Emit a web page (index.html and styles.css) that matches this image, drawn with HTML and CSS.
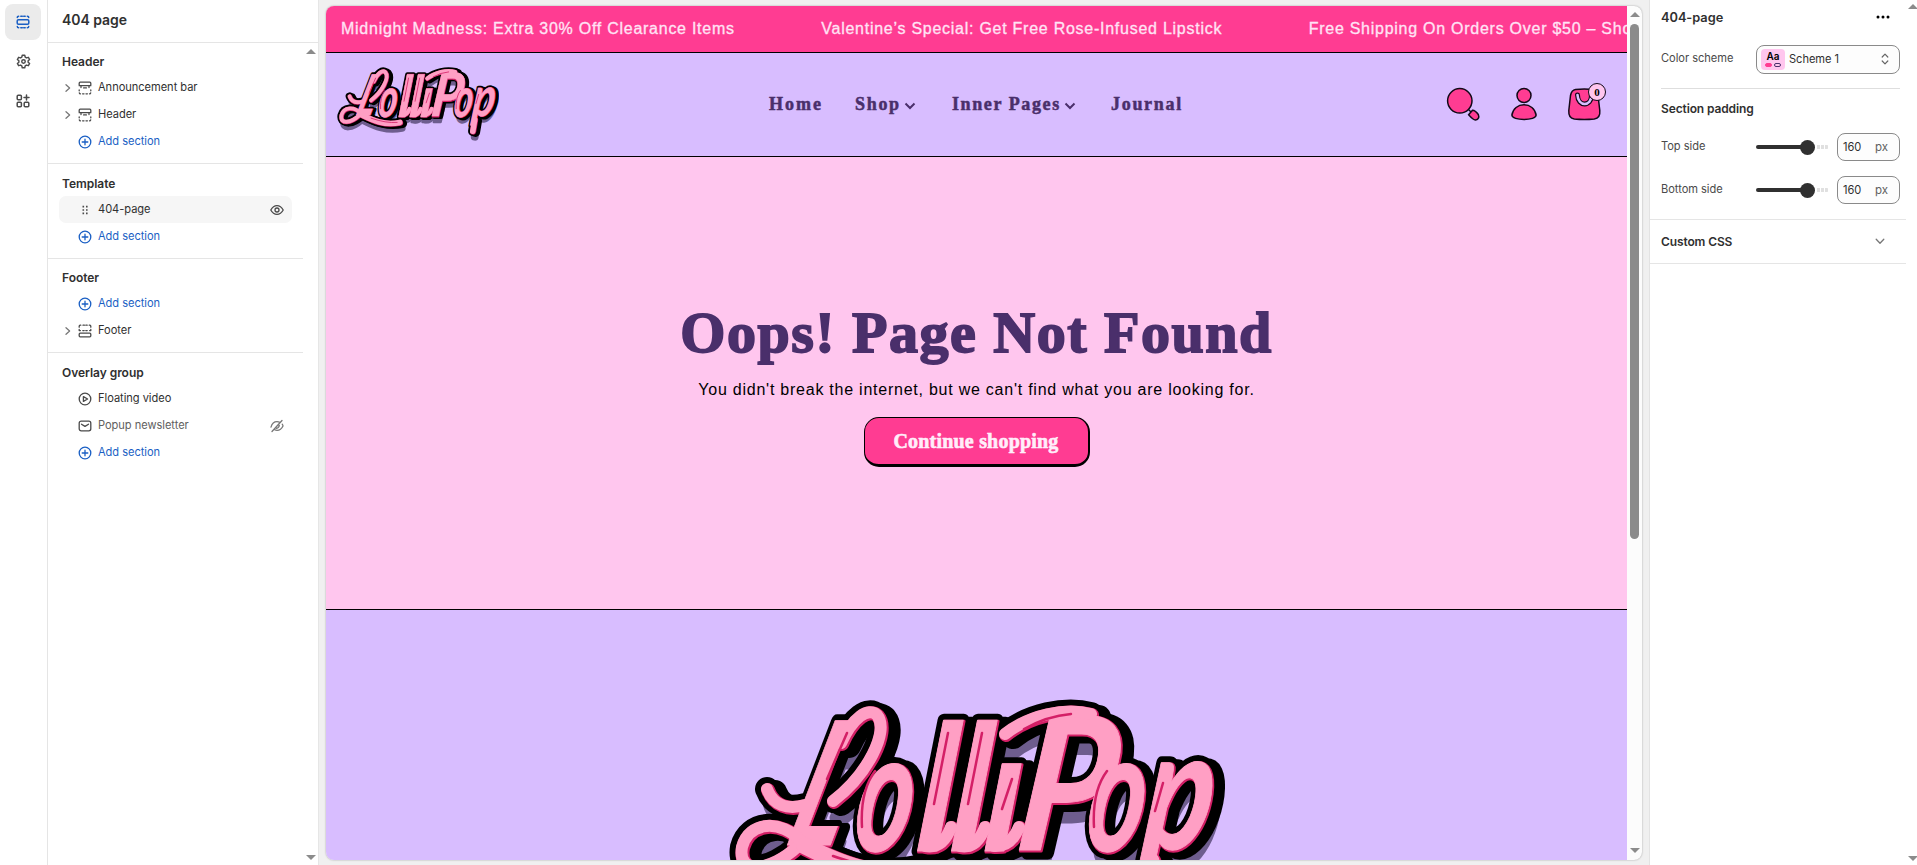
FILE: index.html
```html
<!DOCTYPE html>
<html lang="en">
<head>
<meta charset="utf-8">
<title>404 page</title>
<link rel="stylesheet" href="styles.css">
</head>
<body>
<svg class="defs" width="0" height="0" aria-hidden="true">
  <defs>
  <symbol id="plus" viewBox="0 0 14 14"><circle cx="7" cy="7" r="5.8"/><path d="M7 4.2v5.6M4.2 7h5.6"/></symbol>
  <symbol id="caret" viewBox="0 0 8 10"><path d="M2 1.8 5.6 5 2 8.2"/></symbol>
  <symbol id="head" viewBox="0 0 14 14"><path d="M1.2 4V2.2Q1.2 1.2 2.2 1.2h9.6q1 0 1 1V4M1.2 4.7h11.6M3 4.7v1.8M11 4.7v1.8M5.6 6.9h2.8M1.2 9v.8M12.8 9v.8M1.3 11.8q.2 1 1.2 1M12.7 11.8q-.2 1-1.2 1M4.6 12.8h1.4M8 12.8h1.4"/></symbol>
  <symbol id="foot" viewBox="0 0 14 14"><path d="M1.2 3.2V2.2q0-1 1-1h.6M12.8 3.2V2.2q0-1-1-1h-.6M5 1.2h1.4M7.8 1.2h1.4M1.2 5.4v1.2h1.2M12.8 5.4v1.2h-1.2M4.8 6.6h1.4M7.8 6.6h1.4"/><rect x="1.2" y="9.2" width="11.6" height="3.6" rx="1"/></symbol>
  <symbol id="eye" viewBox="0 0 14 14"><path d="M.8 7C2.3 4.200 4.500 2.600 7 2.600S11.700 4.200 13.200 7c-1.500 2.800-3.700 4.400-6.200 4.400S2.300 9.800.8 7Z"/><circle cx="7" cy="7" r="2"/></symbol>
  <symbol id="up" viewBox="0 0 10 5"><path d="M0 5 5 0l5 5Z"/></symbol>
  <symbol id="down" viewBox="0 0 10 5"><path d="M0 0h10L5 5Z"/></symbol>
  <g id="word">
    <text transform="translate(54 146) skewX(-17) scale(.64 1)" font-size="172">L</text>
    <text transform="translate(122 152) skewX(-7) scale(.66 1)" font-size="168">o</text>
    <text transform="translate(185 152) skewX(-5) scale(.92 1)" font-size="176">l</text>
    <text transform="translate(219 152) skewX(-5) scale(.92 1)" font-size="176">l</text>
    <text transform="translate(252 152) skewX(-5) scale(.92 1)" font-size="170">ı</text>
    <text transform="translate(284 151) skewX(-7) scale(.88 1)" font-size="186">P</text>
    <text transform="translate(354 152) skewX(-7) scale(.66 1)" font-size="168">o</text>
    <text transform="translate(411 150) skewX(-7) scale(.76 1)" font-size="168">p</text>
  </g>
  <g id="swash">
    <path d="M112 44C124 18 139 8 148 16C161 32 138 76 104 102"/>
    <path d="M38 90C44 106 58 111 76 106"/>
    <path d="M72 142C52 120 20 122 13 148C8 177 42 172 68 148"/>
    <path class="broad" d="M76 147C110 164 146 180 192 170"/>
    <path d="M276 35C300 16 336 8 362 15"/>
    <path class="broad" d="M422 162 416 197"/>
    <path d="M196 147Q214 150 222 128M231 147Q248 150 256 128M265 147Q282 148 290 128"/>
  </g>
  <symbol id="logo" viewBox="0 0 496 227">
    <g class="lg-shadow" transform="translate(6 17)"><use href="#word"/><use href="#swash"/></g>
    <g class="lg-black" transform="translate(8 3)"><use href="#word"/><use href="#swash"/></g>
    <g class="lg-black"><use href="#word"/><use href="#swash"/></g>
    <g class="lg-red" transform="translate(1 1)"><use href="#word"/><use href="#swash"/></g>
    <g class="lg-pink"><use href="#word"/><use href="#swash"/></g>
    <g class="lg-line"><path d="M98 80 118 34M133 128Q131 92 146 72M205 105 219 34M239 105 253 34M273 110 283 80M295 30Q318 17 342 15M365 128Q363 92 378 72M426 112 434 84M104 157Q150 173 184 170"/></g>
  </symbol>
  </defs>
</svg>

<div class="app">
  <nav class="rail">
    <div class="rail-btn on"><svg class="ic blue" width="14" height="14" viewBox="0 0 14 14"><rect x="1.200" y="4.800" width="11.600" height="4.400" rx="1.200"/><path d="M1.300 2.600q0-1.400 1.400-1.400M12.700 2.600q0-1.400-1.400-1.400M4.800 1.200h1.500M7.700 1.200h1.500M1.300 11.400q0 1.400 1.400 1.400M12.700 11.400q0 1.400-1.400 1.400M4.800 12.800h1.500M7.700 12.800h1.500"/></svg></div>
    <div class="rail-btn"><svg class="ic" width="15" height="15" viewBox="0 0 24 24"><path class="w2" d="M10 2h4l.7 3.100 2 1.200 3.100-1 2 3.500-2.400 2.100v2.200l2.400 2.100-2 3.500-3.100-1-2 1.200L14 22h-4l-.7-3.100-2-1.200-3.100 1-2-3.500 2.400-2.100v-2.200L2.200 8.800l2-3.500 3.100 1 2-1.200Z"/><circle class="w2" cx="12" cy="12" r="2.800"/></svg></div>
    <div class="rail-btn"><svg class="ic" width="14" height="14" viewBox="0 0 14 14"><rect x="1.200" y="1.200" width="4.200" height="4.600" rx="1"/><rect x="1.200" y="8.200" width="4.200" height="4.600" rx="1"/><rect x="8.200" y="8.200" width="4.600" height="4.600" rx="1"/><path d="M10.500 1v5M8 3.500h5"/></svg></div>
  </nav>

  <aside class="panel">
    <h1 class="panel-title">404 page</h1>
    <div class="panel-body">
      <div class="groups">
        <section class="group first">
          <h2>Header</h2>
          <div class="row"><svg class="ic caret"><use href="#caret"/></svg><svg class="ic i14"><use href="#head"/></svg><span>Announcement bar</span></div>
          <div class="row"><svg class="ic caret"><use href="#caret"/></svg><svg class="ic i14"><use href="#head"/></svg><span>Header</span></div>
          <div class="row add"><svg class="ic i14"><use href="#plus"/></svg><span>Add section</span></div>
        </section>
        <section class="group tall">
          <h2>Template</h2>
          <div class="row sel"><svg class="dots" width="14" height="14" viewBox="0 0 14 14"><path d="M4.500 2.800h1.600v1.600H4.500zM8 2.800h1.600v1.600H8zM4.500 6.200h1.600v1.600H4.500zM8 6.200h1.600v1.600H8zM4.500 9.600h1.600v1.600H4.500zM8 9.600h1.600v1.600H8z"/></svg><span>404-page</span><svg class="ic i14 end"><use href="#eye"/></svg></div>
          <div class="row add"><svg class="ic i14"><use href="#plus"/></svg><span>Add section</span></div>
        </section>
        <section class="group first">
          <h2>Footer</h2>
          <div class="row add"><svg class="ic i14"><use href="#plus"/></svg><span>Add section</span></div>
          <div class="row"><svg class="ic caret"><use href="#caret"/></svg><svg class="ic i14"><use href="#foot"/></svg><span>Footer</span></div>
        </section>
        <section class="group last">
          <h2>Overlay group</h2>
          <div class="row"><svg class="ic i14" viewBox="0 0 14 14"><circle cx="7" cy="7" r="5.800"/><path d="M5.400 4.600v4.800L9.600 7Z"/></svg><span>Floating video</span></div>
          <div class="row dim"><svg class="ic i14" viewBox="0 0 14 14"><rect x="1.200" y="2.200" width="11.600" height="9.600" rx="2"/><path d="M3.500 5.200 7 7.400l3.500-2.200"/></svg><span>Popup newsletter</span><svg class="ic i14 end" viewBox="0 0 14 14"><path d="M1 8.200C2 4.600 4.500 2.700 7 2.700q1.600 0 2.800.7M12.200 5.200Q13 6.200 13 7c-1.300 2.800-3.500 4.300-6 4.300q-1 0-2-.4M12 1.500 2 12.500M6.600 9.300Q9 9 9.300 6.300"/></svg></div>
          <div class="row add"><svg class="ic i14"><use href="#plus"/></svg><span>Add section</span></div>
        </section>
      </div>
      <div class="sb"><svg class="arr"><use href="#up"/></svg><svg class="arr"><use href="#down"/></svg></div>
    </div>
  </aside>

  <main class="stage">
    <div class="preview">
      <div class="site">
        <div class="ticker"><span>Midnight Madness: Extra 30% Off Clearance Items</span><span>Valentine’s Special: Get Free Rose-Infused Lipstick</span><span>Free Shipping On Orders Over $50 – Shop</span></div>
        <header class="site-head">
          <svg class="logo-sm"><use href="#logo"/></svg>
          <nav class="menu">
            <a class="m1">Home</a>
            <a class="m2">Shop<svg class="chev" viewBox="0 0 12 8"><path d="m1.500 1.500 4.500 4.500 4.500-4.500"/></svg></a>
            <a class="m3">Inner Pages<svg class="chev" viewBox="0 0 12 8"><path d="m1.500 1.500 4.500 4.500 4.500-4.500"/></svg></a>
            <a class="m4">Journal</a>
          </nav>
          <div class="tools">
            <svg width="34" height="34" viewBox="0 0 34 34"><path d="m21.500 21.500 4 4"/><circle cx="12.800" cy="12.800" r="12.200"/><path d="M21.600 26.800 25.500 22.200Q28 22 31.300 26.500 33 31 28.500 32 26.500 32.300 21.600 26.800Z"/></svg>
            <svg width="26" height="34" viewBox="0 0 26 34"><circle cx="13" cy="7.500" r="7"/><path d="M.9 27C2 20.500 7 16.800 13 16.800S24 20.500 25.100 27c.3 6-24.500 6-24.200 0Z"/></svg>
            <div class="bag">
              <svg width="34" height="34" viewBox="0 0 34 34"><path d="M7.500 1.500Q16.500.300 25 1.500q4 .5 5 6l1.800 15q.7 7.500-5.500 8.500-10 1-20 0Q.300 30 .800 22.500L2.500 7.500q1-5.500 5-6Z"/><path class="handle" d="M9.500 7c.5 12 14 12 14 0"/><path class="handle-in" d="M9.500 7c.5 12 14 12 14 0"/></svg>
              <span class="badge">0</span>
            </div>
          </div>
        </header>
        <section class="hero">
          <h2 class="hero-title">Oops! Page Not Found</h2>
          <p class="hero-text">You didn't break the internet, but we can't find what you are looking for.</p>
          <a class="cta">Continue shopping</a>
        </section>
        <footer class="site-foot"><svg class="logo-lg"><use href="#logo"/></svg></footer>
      </div>
      <div class="scroll"><svg class="arr"><use href="#up"/></svg><div class="thumb"></div><svg class="arr"><use href="#down"/></svg></div>
    </div>
  </main>

  <aside class="props">
    <div class="props-body">
      <div class="props-main">
        <div class="p-head"><h2>404-page</h2><svg width="14" height="4" viewBox="0 0 14 4"><circle cx="2" cy="2" r="1.500"/><circle cx="7" cy="2" r="1.500"/><circle cx="12" cy="2" r="1.500"/></svg></div>
        <div class="field scheme"><label>Color scheme</label><div class="select"><span class="swatch"><b>Aa</b><i><em class="f"></em><em></em></i></span><span>Scheme 1</span><svg class="ic" width="8" height="12" viewBox="0 0 8 12"><path d="M1.200 4 4 1.200 6.800 4M1.200 8 4 10.800 6.800 8"/></svg></div></div>
        <h3>Section padding</h3>
        <div class="field"><label>Top side</label><div class="slider"><i class="fill"></i><i class="knob"></i><i class="tick"></i></div><div class="num"><span>160</span><small>px</small></div></div>
        <div class="field"><label>Bottom side</label><div class="slider"><i class="fill"></i><i class="knob"></i><i class="tick"></i></div><div class="num"><span>160</span><small>px</small></div></div>
      </div>
      <div class="css-row"><h3>Custom CSS</h3><svg class="ic" width="10" height="7" viewBox="0 0 10 7"><path d="m1.200 1.200 3.800 4 3.800-4"/></svg></div>
    </div>
    <div class="sb"><svg class="arr"><use href="#up"/></svg><svg class="arr"><use href="#down"/></svg></div>
  </aside>
</div>
</body>
</html>
```
FILE: styles.css
```css
* { box-sizing: border-box; }
body { margin: 0; font-family: Inter, "Liberation Sans", sans-serif; color: #303030; font-size: 11.1px; letter-spacing: -.04px; overflow: hidden; }
h1, h2, h3, p { margin: 0; }
svg { display: block; flex: none; }
.defs { position: absolute; }
.app { display: flex; height: 865px; width: 1917px; background: #f0f0f0; }

.ic { fill: none; stroke: #4a4a4a; stroke-width: 1.3; stroke-linecap: round; stroke-linejoin: round; }
.i14 { width: 14px; height: 14px; }
.ic.blue { stroke: #1a5fc4; }
.w2 { stroke-width: 2.2; }
.arr { width: 10px; height: 5px; fill: #8b8b8b; }

.rail { width: 48px; background: #fff; border-right: 1px solid #e5e5e5; padding: 4px 0 0 5px; display: flex; flex-direction: column; gap: 4px; }
.rail-btn { width: 36px; height: 36px; border-radius: 8px; display: grid; place-items: center; }
.rail-btn.on { background: #ebebeb; }
.rail-btn:not(.on) { padding-bottom: 2px; }
.rail .ic { stroke-width: 1.5; }
.rail .w2 { stroke-width: 2.3; }

.panel { width: 271px; background: #fff; border-right: 1px solid #e6e6e6; display: flex; flex-direction: column; }
.panel-title { height: 43px; padding: 0 14px; line-height: 40px; font-size: 14px; font-weight: 600; border-bottom: 1px solid #e5e5e5; }
.panel-body { flex: 1; display: flex; justify-content: space-between; }
.groups { width: 255px; }
.sb { display: flex; flex-direction: column; justify-content: space-between; }
.panel .sb { padding: 6px 2px 5px 0; }
.group { padding: 8px 0 7px; border-bottom: 1px solid #e5e5e5; }
.group.first { padding: 7px 0 8px; }
.group.tall { padding-bottom: 8px; }
.group.last { border: 0; }
.group h2 { height: 24px; line-height: 23px; padding-left: 14px; font-size: 12px; font-weight: 600; }
.row { display: flex; align-items: center; height: 27px; margin: 0 11px; padding: 0 8px 0 19px; border-radius: 7px; }
.row span { margin-left: 6px; line-height: 26px; height: 27px; }
.row .end { margin-left: auto; }
.row .caret { width: 8px; height: 10px; margin: 0 6px 0 -14px; stroke: #777; }
.row.sel { background: #f6f6f6; }
.row.add { color: #1a5fc4; }
.row.add .ic { stroke: #1a5fc4; }
.row.dim { color: #616161; }
.row.dim .end { stroke: #777; }
.dots { fill: #4a4a4a; }

.stage { width: 1331px; padding: 6px 8px 5px 7px; }
.preview { height: 854px; width: 1316px; border-radius: 8px; overflow: hidden; display: flex; background: #fcfcfc; box-shadow: 0 0 2px rgba(0,0,0,.35); }
.site { width: 1301px; display: flex; flex-direction: column; }
.ticker { height: 47px; background: #ff3c92; border-bottom: 1px solid #000; display: flex; gap: 86.500px; padding-left: 15px; font: 16px/45px "Liberation Sans", Arial, sans-serif; letter-spacing: .74px; color: #ffe3f5; white-space: nowrap; overflow: hidden; -webkit-text-stroke: .3px #ffe3f5; }
.ticker span { flex: none; }
.site-head { height: 104px; flex: none; background: #d8bdff; border-bottom: 1px solid #000; display: flex; }
.logo-sm { width: 162px; height: 74px; margin: 14px 0 0 11px; }
.menu { margin-left: 270px; display: flex; font: bold 18px/101px "Liberation Serif", serif; letter-spacing: 1.7px; color: #4a2f6b; width: 506px; -webkit-text-stroke: .5px #4a2f6b; white-space: nowrap; }
.menu a { display: flex; align-items: center; }
.m1 { width: 86px; letter-spacing: 2px; }
.m2 { width: 97px; }
.m3 { width: 159px; letter-spacing: 1.6px; }
.chev { width: 12px; height: 8px; margin: 3px 0 0 3px; fill: none; stroke: #4a2f6b; stroke-width: 2; }
.tools { display: flex; padding-top: 34px; margin-left: 172px; fill: #ff3c92; stroke: #120818; stroke-width: 1.5; }
.tools svg { overflow: visible; }
.tools > svg:first-child { margin: 1px 30px 0 0; }
.tools > svg:nth-child(2) { margin-right: 31px; margin-top: 1px; }
.bag { position: relative; }
.bag svg { margin-top: 1px; }
.handle { fill: none; stroke: #120818; stroke-width: 5; stroke-linecap: round; }
.handle-in { fill: none; stroke: #d8bdff; stroke-width: 2.6; stroke-linecap: round; }
.badge { position: absolute; left: 20px; top: -4px; width: 18px; height: 18px; border-radius: 50%; background: #ffc6ee; border: 1px solid #120818; color: #000; font: bold 11px/16px "Liberation Serif", serif; text-align: center; }
.hero { height: 453px; flex: none; background: #ffc6ee; border-bottom: 1px solid #000; display: flex; flex-direction: column; align-items: center; }
.hero-title { margin-top: 141px; height: 76px; font: bold 58px/70px "Liberation Serif", serif; letter-spacing: 1.5px; color: #4a2f6b; -webkit-text-stroke: 1.8px #4a2f6b; white-space: nowrap; }
.hero-text { height: 43px; font: 16px/32px "Liberation Sans", Arial, sans-serif; letter-spacing: .76px; color: #000; white-space: nowrap; }
.cta { width: 226px; height: 50px; border: solid #000; border-width: 1px 2px 3px 1px; border-radius: 15px; background: #ff3c92; color: #ffeefa; text-align: center; font: bold 20px/47px "Liberation Serif", serif; letter-spacing: .2px; -webkit-text-stroke: .6px #ffeefa; }
.site-foot { flex: 1; min-height: 0; overflow: hidden; background: #d8bdff; display: flex; justify-content: center; padding-top: 89px; }
.logo-lg { width: 496px; height: 227px; }

#word text { font-family: Lato, "Open Sans", sans-serif; font-weight: 700; font-style: italic; letter-spacing: 0; stroke-width: var(--o); stroke-linejoin: round; }
#swash path { fill: none; stroke-width: calc(11px + var(--o)); stroke-linecap: round; stroke-linejoin: round; }
#swash .broad { stroke-width: calc(16px + var(--o)); }
.lg-shadow { --o: 8px; fill: #6e5d8e; stroke: #6e5d8e; }
.lg-black { --o: 13px; fill: #000; stroke: #000; }
.lg-red { --o: 3px; fill: #d41f66; stroke: #d41f66; }
.lg-pink { --o: 1px; fill: #ff9fc4; stroke: #ff9fc4; }
.lg-line { fill: none; stroke: #d41f66; stroke-width: 2.5; stroke-linecap: round; }

.scroll { width: 15px; display: flex; flex-direction: column; align-items: center; padding: 6px 0 7px; }
.thumb { width: 9px; height: 515px; border-radius: 5px; background: #8b8b8b; margin: 7px 0 auto; }

.props { width: 267px; background: #fff; display: flex; justify-content: space-between; box-shadow: -1px 0 0 #e3e3e3; }
.props .sb { padding: 4px 0 4px; width: 9px; overflow: hidden; }
.props-body { width: 256px; }
.props-main { padding: 0 6px 0 11px; height: 220px; border-bottom: 1px solid #e5e5e5; }
.p-head { height: 36px; display: flex; justify-content: space-between; align-items: center; padding-right: 10px; }
.p-head svg { margin-bottom: 2px; }
.p-head h2 { font-size: 12.8px; font-weight: 600; margin-bottom: 1px; }
.field { display: flex; align-items: center; height: 43px; padding-bottom: 1px; color: #4a4a4a; }
.field label { width: 95px; line-height: 15px; margin-top: -1px; }
.field.scheme { height: 53px; padding-bottom: 6px; border-bottom: 1px solid #dedede; }
.select { width: 144px; height: 29px; border: 1px solid #8a8a8a; border-radius: 8px; display: flex; align-items: center; padding: 0 10px 0 4px; gap: 4px; background: #fdfdfd; color: #303030; line-height: 15px; }
.select .ic { margin-left: auto; stroke: #666; stroke-width: 1.2; }
.swatch { width: 24px; height: 21px; background: #ffc6ee; border-radius: 4px; text-align: center; display: flex; flex-direction: column; align-items: center; }
.swatch b { font: 600 10px/14px Inter, sans-serif; color: #000; }
.swatch i { display: flex; gap: 2px; }
.swatch em { width: 7px; height: 4px; border: 1px solid #4a2f6b; border-radius: 2px; }
.swatch em.f { background: #ff3c92; border-color: #ff3c92; }
.props h3 { font-size: 12px; font-weight: 600; line-height: 15px; letter-spacing: -.12px; }
.props-main h3 { height: 37px; padding-top: 12px; }
.slider { width: 73px; display: flex; align-items: center; }
.fill { width: 46px; height: 4px; border-radius: 2px 0 0 2px; background: #303030; }
.knob { width: 15px; height: 15px; border-radius: 50%; background: #303030; margin-left: -2px; }
.tick { width: 12px; height: 4px; margin-left: 2px; border-radius: 0 2px 2px 0; background: repeating-linear-gradient(90deg, #e0e0e0 0 3px, #fff 3px 4px); }
.num { margin-left: 8px; width: 63px; height: 28px; border: 1px solid #8a8a8a; border-radius: 8px; display: flex; justify-content: space-between; align-items: center; padding: 0 11px 1px 5px; background: #fdfdfd; color: #303030; }
.num small { font-size: 11.500px; color: #616161; }
.css-row { height: 44px; border-bottom: 1px solid #e5e5e5; display: flex; align-items: center; justify-content: space-between; padding: 0 21px 0 11px; }
.css-row .ic { stroke: #777; }
```
